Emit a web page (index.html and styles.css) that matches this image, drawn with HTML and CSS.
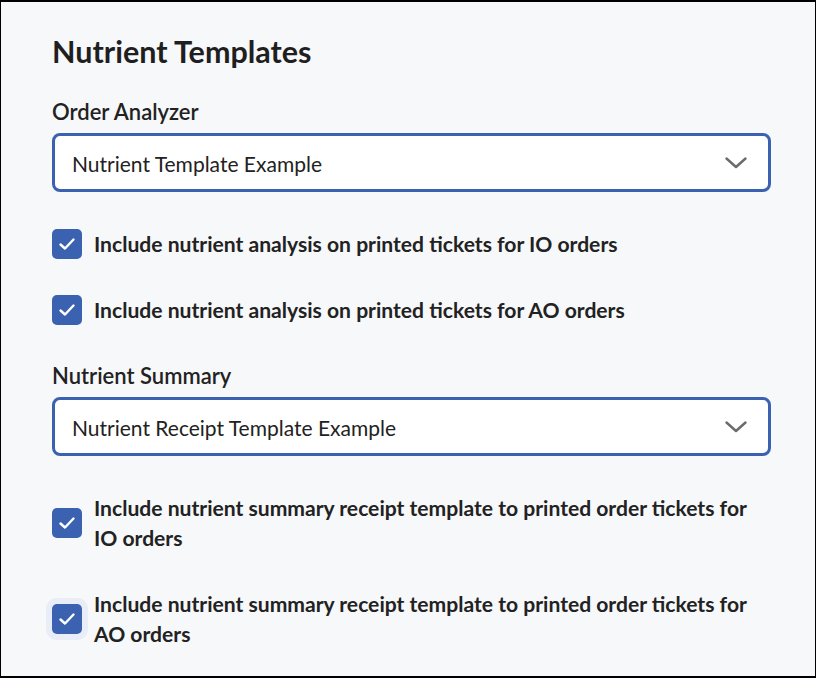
FILE: index.html
```html
<!DOCTYPE html>
<html lang="en">
<head>
    <meta charset="UTF-8">
    <meta name="viewport" content="width=device-width, initial-scale=1.0">
    <title>Nutrient Templates</title>
    <link rel="stylesheet" href="styles.css">
</head>
<body>
    <div class="frame">
        <h1>Nutrient Templates</h1>

        <label class="field-label" for="order-analyzer">Order Analyzer</label>
        <div class="select">
            <span id="order-analyzer">Nutrient Template Example</span>
            <svg class="chevron" width="22" height="12" viewBox="0 0 22 12">
                <path d="M1.5 1.5 L11 10 L20.5 1.5" fill="none" stroke="#6b6b6b" stroke-width="2.4" stroke-linecap="round" stroke-linejoin="round"/>
            </svg>
        </div>

        <div class="check-row">
            <span class="box"><svg width="18" height="14" viewBox="0 0 18 14"><path d="M2.5 7.5 L7 11.5 L15.5 2.5" fill="none" stroke="#fff" stroke-width="2.4" stroke-linecap="round" stroke-linejoin="round"/></svg></span>
            <span class="check-text">Include nutrient analysis on printed tickets for IO orders</span>
        </div>
        <div class="check-row">
            <span class="box"><svg width="18" height="14" viewBox="0 0 18 14"><path d="M2.5 7.5 L7 11.5 L15.5 2.5" fill="none" stroke="#fff" stroke-width="2.4" stroke-linecap="round" stroke-linejoin="round"/></svg></span>
            <span class="check-text">Include nutrient analysis on printed tickets for AO orders</span>
        </div>

        <label class="field-label summary" for="nutrient-summary">Nutrient Summary</label>
        <div class="select">
            <span id="nutrient-summary">Nutrient Receipt Template Example</span>
            <svg class="chevron" width="22" height="12" viewBox="0 0 22 12">
                <path d="M1.5 1.5 L11 10 L20.5 1.5" fill="none" stroke="#6b6b6b" stroke-width="2.4" stroke-linecap="round" stroke-linejoin="round"/>
            </svg>
        </div>

        <div class="check-row">
            <span class="box"><svg width="18" height="14" viewBox="0 0 18 14"><path d="M2.5 7.5 L7 11.5 L15.5 2.5" fill="none" stroke="#fff" stroke-width="2.4" stroke-linecap="round" stroke-linejoin="round"/></svg></span>
            <span class="check-text">Include nutrient summary receipt template to printed order tickets for IO orders</span>
        </div>
        <div class="check-row">
            <span class="box focused"><svg width="18" height="14" viewBox="0 0 18 14"><path d="M2.5 7.5 L7 11.5 L15.5 2.5" fill="none" stroke="#fff" stroke-width="2.4" stroke-linecap="round" stroke-linejoin="round"/></svg></span>
            <span class="check-text">Include nutrient summary receipt template to printed order tickets for AO orders</span>
        </div>
    </div>
</body>
</html>
```

FILE: styles.css
```css
* {
    box-sizing: border-box;
}

body {
    margin: 0;
    font-family: 'Lato', 'Noto Sans', sans-serif;
    color: #222;
}

.frame {
    width: 816px;
    height: 678px;
    background-color: #f7f8fa;
    border-style: solid;
    border-color: #000;
    border-width: 2px 1px 2px 1px;
    padding: 31px 44px 0 51px;
    display: flex;
    flex-direction: column;
}

h1 {
    margin: 0;
    font-size: 30.5px;
    line-height: 36px;
    font-weight: 700;
    color: #1f1f1f;
}

.field-label {
    display: block;
    margin-top: 30px;
    font-size: 22px;
    line-height: 26px;
    font-weight: 600;
}

.field-label.summary {
    margin-top: 38px;
}

.select {
    margin-top: 8px;
    height: 59px;
    background: white;
    border: 3px solid #3a62b0;
    border-radius: 8px;
    display: flex;
    align-items: center;
    justify-content: space-between;
    padding: 0 21px 0 17px;
    font-size: 21px;
}

.select span {
    padding-top: 1px;
}

.check-row {
    display: flex;
    align-items: center;
    gap: 12px;
    margin-top: 36px;
}

.select + .check-row {
    margin-top: 37px;
}

.box {
    flex: none;
    width: 30px;
    height: 30px;
    border-radius: 5px;
    background-color: #3a62b0;
    display: flex;
    align-items: center;
    justify-content: center;
}

.box.focused {
    box-shadow: 0 0 0 6px #e8edf8;
}

.check-text {
    font-size: 21.1px;
    line-height: 30px;
    font-weight: 700;
    padding-right: 18px;
}
```
